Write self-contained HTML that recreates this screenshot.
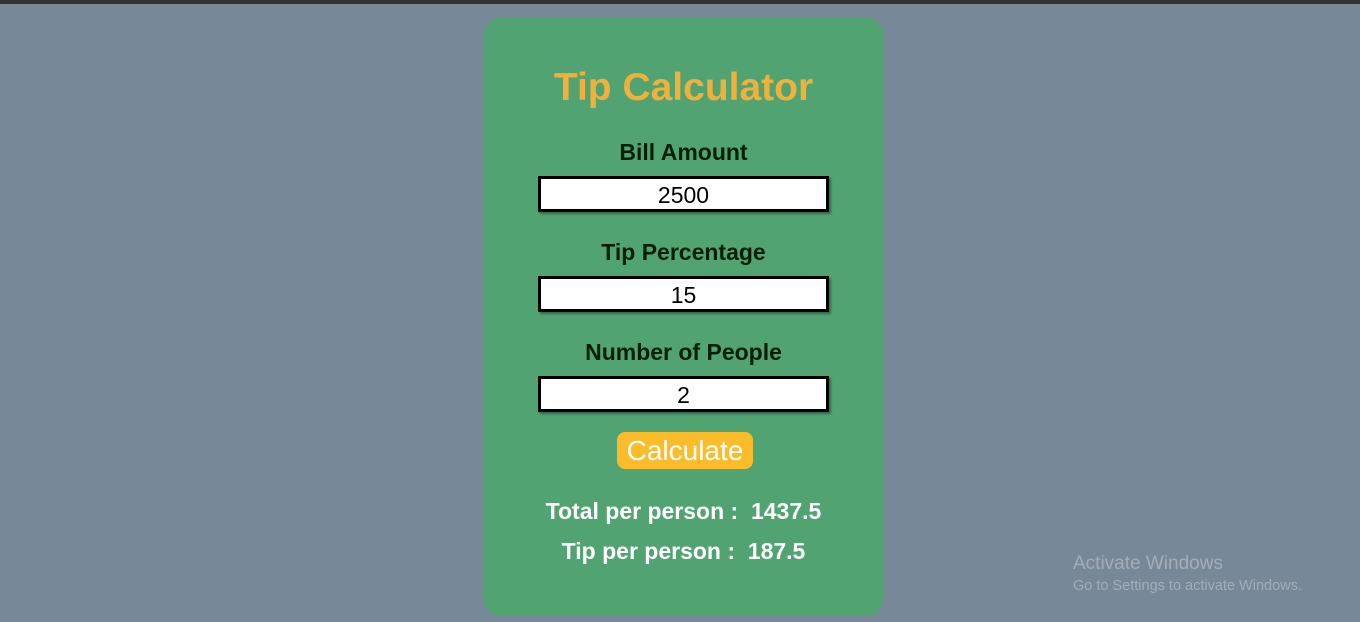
<!DOCTYPE html>
<html><head><meta charset="utf-8"><style>
body{margin:0;width:1360px;height:622px;background:#778899;font-family:"Liberation Sans",sans-serif;position:relative;overflow:hidden}
.top{position:absolute;left:0;top:0;width:1360px;height:4px;background:#333}
.card{position:absolute;left:484px;top:18px;width:399px;height:598px;background:#52a372;border-radius:16px}
.t{position:absolute;left:0;width:399px;text-align:center;white-space:nowrap}
h1{margin:0;color:#f0b03c;font-size:39px;font-weight:bold}
.lbl{font-size:23px;font-weight:bold;color:#061f06}
.inp{position:absolute;left:54px;width:285px;height:30px;background:#fff;border:3px solid #000;box-shadow:2px 2px 2px rgba(0,0,0,.35);text-align:center;font-size:23px;line-height:32px;color:#000}
.btn{position:absolute;left:133px;top:414px;width:136px;height:37px;background:#fbbc2a;border-radius:8px;color:#fff;font-size:28px;line-height:38px;text-align:center}
.res{font-size:23px;font-weight:bold;color:#fff}
.win{position:absolute;left:1073px;color:#a3adb8;font-family:"Liberation Sans",sans-serif}
</style></head><body>
<div class="top"></div>
<div class="card">
<div class="t" style="top:48px"><h1>Tip Calculator</h1></div>
<div class="t lbl" style="top:121px">Bill Amount</div>
<div class="inp" style="top:158px">2500</div>
<div class="t lbl" style="top:221px">Tip Percentage</div>
<div class="inp" style="top:258px">15</div>
<div class="t lbl" style="top:321px">Number of People</div>
<div class="inp" style="top:358px">2</div>
<div class="btn">Calculate</div>
<div class="t res" style="top:480px">Total per person :&nbsp; 1437.5</div>
<div class="t res" style="top:520px">Tip per person :&nbsp; 187.5</div>
</div>
<div class="win" style="top:553px;font-size:19px">Activate Windows</div>
<div class="win" style="top:578px;font-size:14.5px">Go to Settings to activate Windows.</div>
</body></html>
